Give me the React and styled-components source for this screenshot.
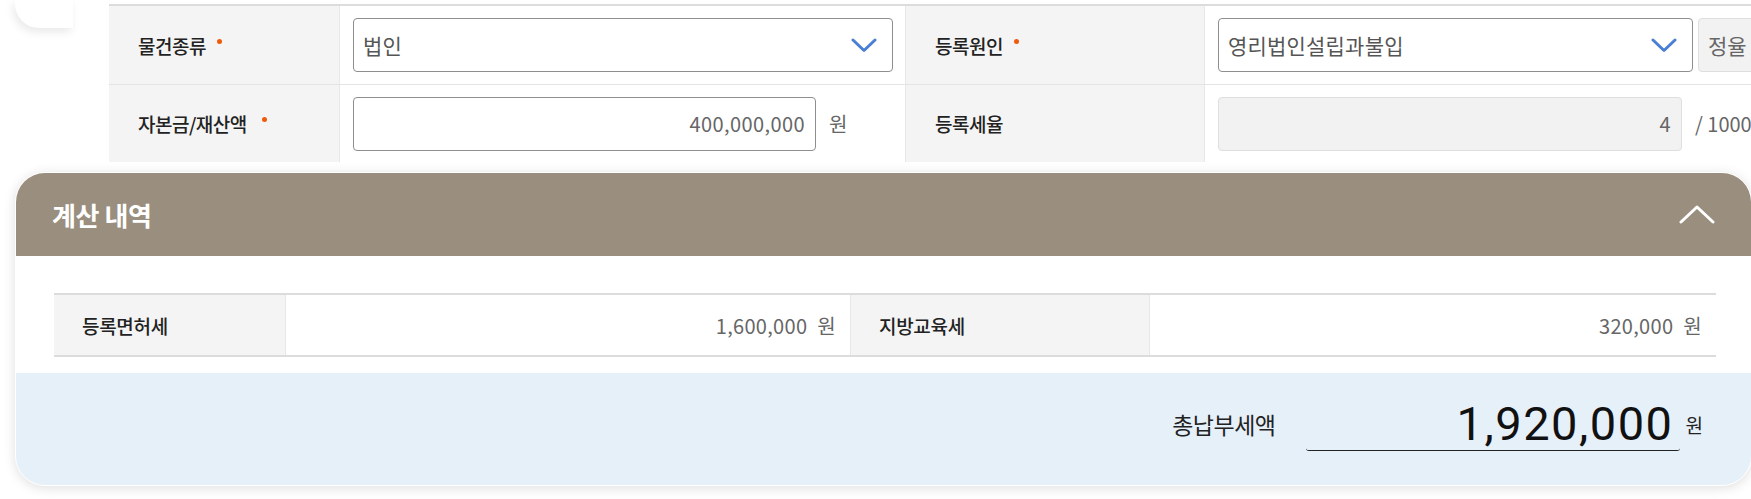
import React from "react";
import styled, { createGlobalStyle } from "styled-components";

const GlobalStyle = createGlobalStyle`
  html, body {
    margin: 0;
    padding: 0;
    background: #ffffff;
  }
  body {
    font-family: "Noto Sans CJK KR", "Noto Sans", sans-serif;
    color: #222;
  }
`;

const ChevronDown = () => (
  <svg width="26" height="15" viewBox="0 0 26 15" fill="none">
    <polyline
      points="2,2 13,12.5 24,2"
      stroke="#4b7fd5"
      strokeWidth="3"
      strokeLinecap="round"
      strokeLinejoin="round"
    />
  </svg>
);

const ChevronUp = () => (
  <svg width="36" height="19" viewBox="0 0 36 19" fill="none">
    <polyline
      points="2,17 18,2 34,17"
      stroke="#ffffff"
      strokeWidth="3"
      strokeLinecap="round"
      strokeLinejoin="round"
    />
  </svg>
);

const App = () => {
  return (
    <>
      <GlobalStyle />
      <Page>
        <TopArea>
          <StubCard />
          <FormTable>
            <Label>
              물건종류
              <Dot />
            </Label>
            <Value>
              <Select width={540}>
                <span>법인</span>
                <ChevronDown />
              </Select>
            </Value>
            <Label>
              등록원인
              <Dot />
            </Label>
            <Value>
              <Select width={475}>
                <span>영리법인설립과불입</span>
                <ChevronDown />
              </Select>
              <SideButton>정율</SideButton>
            </Value>

            <Label last>
              자본금/재산액&nbsp;
              <Dot />
            </Label>
            <Value last>
              <Field width={463}>400,000,000</Field>
              <Unit>원</Unit>
            </Value>
            <Label last>등록세율</Label>
            <Value last>
              <Field width={464} disabled>
                4
              </Field>
              <Unit>/ 1000</Unit>
            </Value>
          </FormTable>
        </TopArea>

        <Card>
          <CardHeader>
            <CardTitle>계산 내역</CardTitle>
            <ChevronUp />
          </CardHeader>
          <CardBody>
            <ResultTable>
              <ResultLabel>등록면허세</ResultLabel>
              <ResultValue>
                1,600,000<small>원</small>
              </ResultValue>
              <ResultLabel>지방교육세</ResultLabel>
              <ResultValue>
                320,000<small>원</small>
              </ResultValue>
            </ResultTable>
          </CardBody>
          <Summary>
            <SummaryLabel>총납부세액</SummaryLabel>
            <TotalBox>1,920,000</TotalBox>
            <TotalUnit>원</TotalUnit>
          </Summary>
        </Card>
      </Page>
    </>
  );
};

export default App;

const Page = styled.div`
  width: 1751px;
  height: 499px;
  overflow: hidden;
  background: #ffffff;
`;

const TopArea = styled.div`
  display: flex;
  align-items: flex-start;
  height: 162px;
`;

const StubCard = styled.div`
  flex: none;
  width: 58px;
  height: 28px;
  margin-left: 15px;
  background: #ffffff;
  border-bottom-left-radius: 24px;
  box-shadow: -2px 4px 10px rgba(0, 0, 0, 0.09);
`;

const FormTable = styled.div`
  flex: none;
  display: grid;
  grid-template-columns: 231px 566px 299px 566px;
  grid-template-rows: 79px 77px;
  margin-left: 36px;
  margin-top: 4px;
  border-top: 2px solid #dcdcdc;
  background: #ffffff;
`;

const Label = styled.div`
  display: flex;
  align-items: center;
  padding-left: 29px;
  background: #f4f4f4;
  border-bottom: ${(p) => (p.last ? "none" : "1px solid #e3e3e3")};
  border-right: 1px solid #e8e8e8;
  font-size: 19px;
  font-weight: 500;
  color: #222;
  letter-spacing: -0.5px;
`;

const Dot = styled.span`
  display: inline-block;
  width: 5px;
  height: 5px;
  margin-left: 11px;
  margin-bottom: 8px;
  border-radius: 50%;
  background: #f05a0a;
`;

const Value = styled.div`
  display: flex;
  align-items: center;
  padding-left: 13px;
  border-bottom: ${(p) => (p.last ? "none" : "1px solid #e3e3e3")};
  border-right: 1px solid #e8e8e8;
`;

const Select = styled.div`
  box-sizing: border-box;
  width: ${(p) => p.width}px;
  height: 54px;
  display: flex;
  align-items: center;
  justify-content: space-between;
  padding: 0 15px 0 9px;
  border: 1px solid #8e8e8e;
  border-radius: 4px;
  background: #ffffff;
  font-size: 21px;
  color: #555;
  letter-spacing: 0.2px;
`;

const SideButton = styled.div`
  box-sizing: border-box;
  flex: none;
  width: 60px;
  height: 54px;
  margin-left: 5px;
  display: flex;
  align-items: center;
  padding-left: 9px;
  background: #f2f2f2;
  border: 1px solid #dedede;
  border-radius: 4px;
  font-size: 21px;
  color: #666;
`;

const Field = styled.div`
  box-sizing: border-box;
  width: ${(p) => p.width}px;
  height: 54px;
  display: flex;
  align-items: center;
  justify-content: flex-end;
  padding-right: 10px;
  border: 1px solid ${(p) => (p.disabled ? "#dedede" : "#8e8e8e")};
  border-radius: 4px;
  background: ${(p) => (p.disabled ? "#f2f2f2" : "#ffffff")};
  font-size: 20px;
  letter-spacing: 0.4px;
  color: #666;
`;

const Unit = styled.span`
  margin-left: 13px;
  font-size: 20px;
  color: #666;
  white-space: nowrap;
`;

const Card = styled.section`
  box-sizing: border-box;
  width: 1737px;
  margin: 10px 0 0 15px;
  border: 1px solid #ffffff;
  border-radius: 30px;
  overflow: hidden;
  background: #ffffff;
  box-shadow: 0 2px 12px rgba(0, 0, 0, 0.13);
`;

const CardHeader = styled.div`
  height: 83px;
  display: flex;
  align-items: center;
  justify-content: space-between;
  padding: 0 36px 0 36px;
  background: #9a8f7f;
`;

const CardTitle = styled.h2`
  margin: 0;
  font-size: 26px;
  font-weight: 700;
  color: #ffffff;
  letter-spacing: -0.4px;
`;

const CardBody = styled.div`
  padding: 37px 35px 16px 38px;
`;

const ResultTable = styled.div`
  display: grid;
  grid-template-columns: 232px 565px 299px 566px;
  height: 60px;
  border-top: 2px solid #dcdcdc;
  border-bottom: 2px solid #dcdcdc;
`;

const ResultLabel = styled.div`
  display: flex;
  align-items: center;
  padding-left: 28px;
  background: #f4f4f4;
  border-right: 1px solid #e6e6e6;
  font-size: 19px;
  font-weight: 500;
  color: #222;
  letter-spacing: -0.3px;
`;

const ResultValue = styled.div`
  display: flex;
  align-items: center;
  justify-content: flex-end;
  padding-right: 14px;
  border-right: 1px solid #e6e6e6;
  font-size: 20px;
  letter-spacing: 0.3px;
  color: #666;

  &:last-child {
    border-right: none;
  }

  small {
    margin-left: 10px;
    font-size: 20px;
  }
`;

const Summary = styled.div`
  height: 112px;
  display: flex;
  align-items: center;
  justify-content: flex-end;
  padding: 0 48px 10px 0;
  box-sizing: border-box;
  background: #e6f0f9;
`;

const SummaryLabel = styled.span`
  font-size: 23px;
  color: #222;
  letter-spacing: -0.5px;
`;

const TotalBox = styled.div`
  box-sizing: border-box;
  width: 374px;
  height: 53px;
  margin-left: 30px;
  padding-right: 6px;
  text-align: right;
  border-bottom: 1px solid #222;
  border-radius: 0 0 3px 3px;
  font-family: Roboto, "Noto Sans", sans-serif;
  font-size: 47px;
  letter-spacing: 1.5px;
  line-height: 52px;
  color: #111;
`;

const TotalUnit = styled.span`
  margin-left: 6px;
  font-size: 19px;
  color: #222;
`;
